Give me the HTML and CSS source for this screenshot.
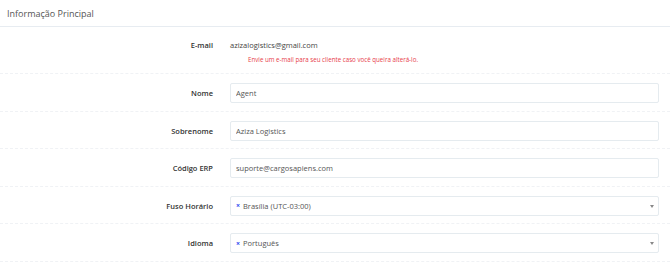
FILE: index.html
```html
<!DOCTYPE html>
<html lang="pt">

<head>
    <meta charset="UTF-8">
    <meta name="viewport" content="width=device-width, initial-scale=1.0">
    <title>Informação Principal</title>
    <link rel="stylesheet" href="styles.css">
</head>

<body>
    <div class="portlet">
        <div class="portlet-title">Informação Principal</div>
        <form class="profile-form">
            <div class="form-row email-row">
                <label>E-mail</label>
                <div class="field">
                    <div class="static-value">azizalogistics@gmail.com</div>
                    <div class="help-text">Envie um e-mail para seu cliente caso você queira alterá-lo.</div>
                </div>
            </div>

            <div class="form-row">
                <label for="nome">Nome</label>
                <input type="text" id="nome" value="Agent">
            </div>

            <div class="form-row">
                <label for="sobrenome">Sobrenome</label>
                <input type="text" id="sobrenome" value="Aziza Logistics">
            </div>

            <div class="form-row">
                <label for="erp">Código ERP</label>
                <input type="text" id="erp" value="suporte@cargosapiens.com">
            </div>

            <div class="form-row">
                <label>Fuso Horário</label>
                <div class="select-box">
                    <span class="select-clear">×</span>
                    <span class="select-value">Brasília (UTC-03:00)</span>
                    <span class="select-arrow"></span>
                </div>
            </div>

            <div class="form-row">
                <label>Idioma</label>
                <div class="select-box">
                    <span class="select-clear">×</span>
                    <span class="select-value">Português</span>
                    <span class="select-arrow"></span>
                </div>
            </div>
        </form>
    </div>
</body>

</html>
```

FILE: styles.css
```css
body {
    margin: 0;
    font-family: 'Open Sans', 'Noto Sans', sans-serif;
    background: #fff;
    color: #333;
}

.portlet {
    background: #fff;
}

.portlet-title {
    height: 26px;
    padding-left: 7px;
    display: flex;
    align-items: center;
    font-size: 9px;
    color: #555;
    border-bottom: 1px solid #e7ecf1;
}

.form-row {
    display: grid;
    grid-template-columns: 213px 1fr;
    column-gap: 17px;
    align-items: center;
    padding: 9px 11px 7.5px 0;
    border-bottom: 1px dashed #f0f2f5;
}

.form-row label {
    text-align: right;
    font-size: 7.5px;
    font-weight: 600;
    color: #333;
}

.email-row {
    align-items: start;
    padding: 13px 11px 8px 0;
}

.email-row label {
    line-height: 10px;
}

.static-value {
    font-size: 7.5px;
    line-height: 10px;
    color: #444;
}

.help-text {
    margin-top: 5px;
    margin-left: 18px;
    font-size: 6.2px;
    line-height: 10px;
    color: #e73d4a;
}

.form-row input[type="text"],
.select-box {
    font-family: inherit;
    font-size: 7.5px;
    height: 20px;
    padding: 0 5px;
    border: 1px solid #e5ebef;
    border-radius: 2px;
    background: #fff;
    color: #555;
    outline: none;
    width: 100%;
    box-sizing: border-box;
}

.select-box {
    display: flex;
    align-items: center;
    position: relative;
}

.select-clear {
    color: #2f4cf0;
    font-size: 7px;
    font-weight: 700;
    margin-right: 3px;
}

.select-arrow {
    position: absolute;
    right: 4px;
    top: 8px;
    border-top: 3px solid #888;
    border-left: 2.5px solid transparent;
    border-right: 2.5px solid transparent;
}
```
